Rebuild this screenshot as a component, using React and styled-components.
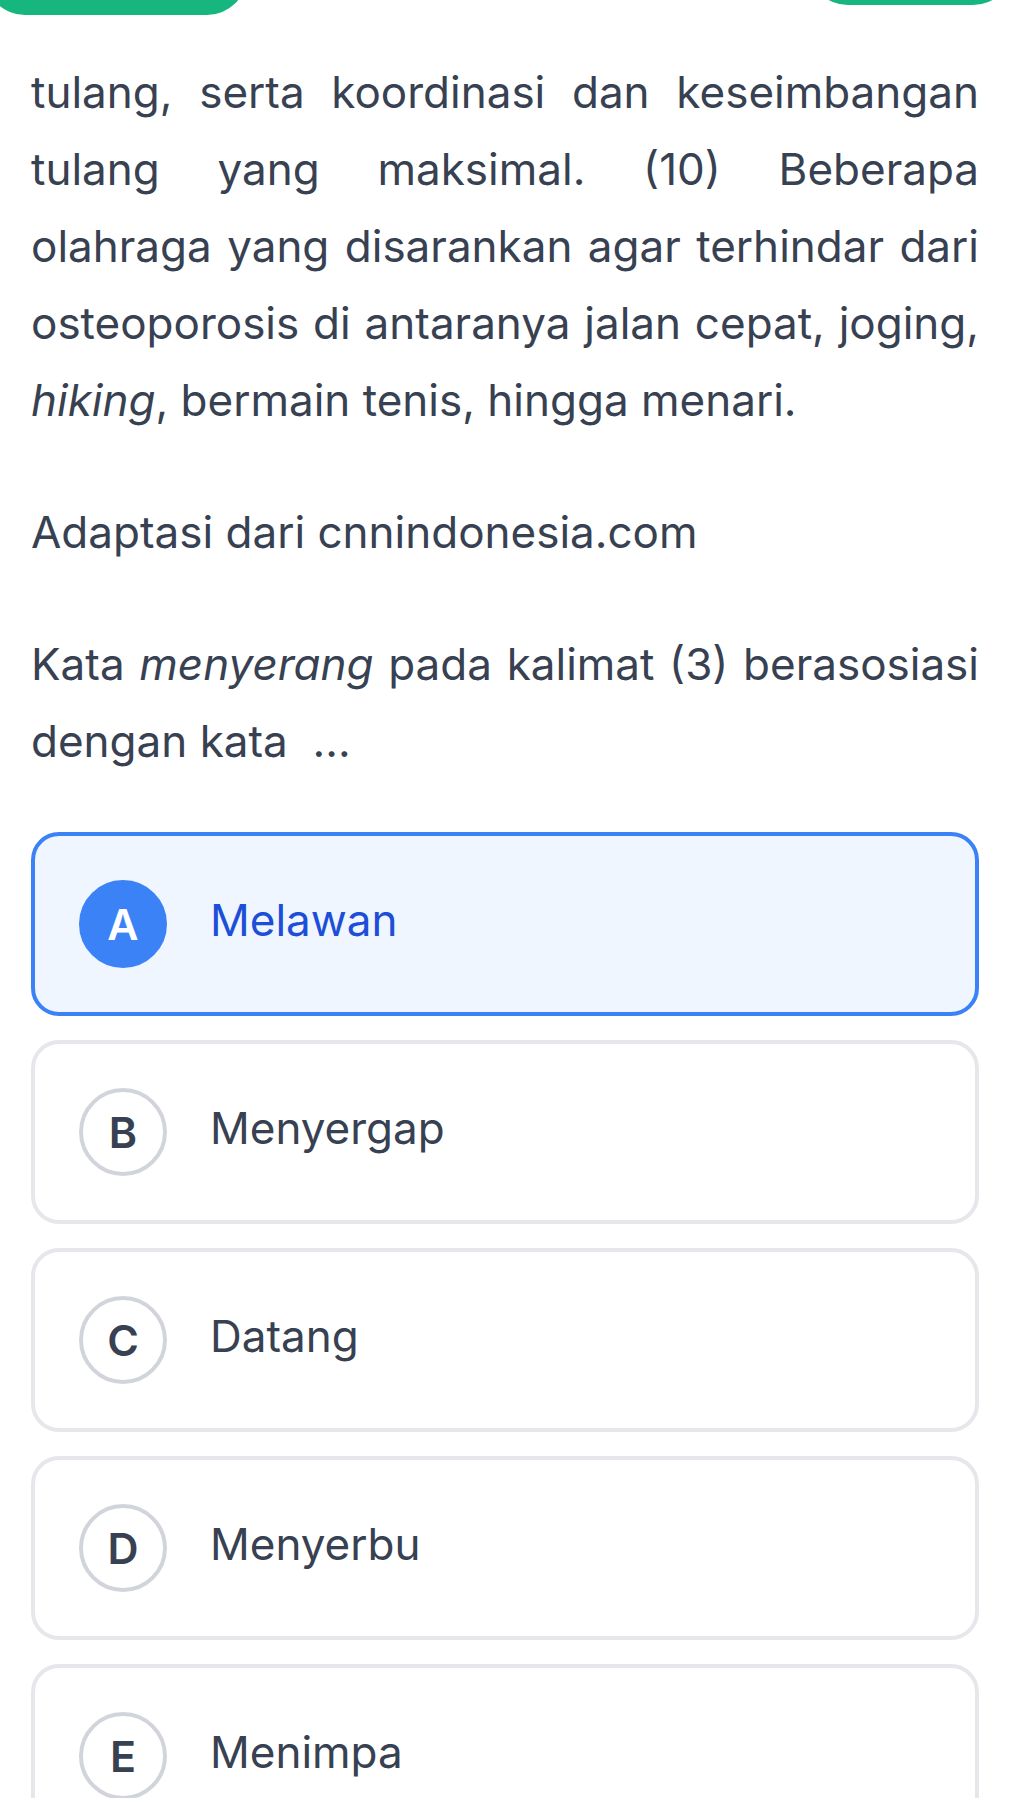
import React from 'react'
import styled, { createGlobalStyle } from 'styled-components'

const GlobalStyle = createGlobalStyle`
  body {
    margin: 0;
    background: #fff;
    font-family: Inter, "Noto Sans", sans-serif;
  }
`

const Screen = styled.div`
  width: 1020px;
  min-height: 1798px;
  overflow: hidden;
`

const TopBar = styled.div`
  display: flex;
  justify-content: space-between;
  align-items: flex-start;
  height: 15px;
  padding-right: 7px;
`

const Pill = styled.div`
  width: ${p => p.$width}px;
  height: 80px;
  margin-top: ${p => p.$visible - 80}px;
  margin-left: ${p => p.$shift || 0}px;
  border-radius: 40px;
  background: #17b67e;
`

const Content = styled.main`
  display: flex;
  flex-direction: column;
  gap: 55px;
  padding: 39px 41px 40px 31px;
`

const Passage = styled.div`
  color: #374151;
  font-size: 44px;
  line-height: 77px;
`

const Line = styled.div`
  text-align: justify;
  text-align-last: ${p => (p.$last ? 'left' : 'justify')};
  white-space: nowrap;
`

const OptionList = styled.div`
  display: flex;
  flex-direction: column;
  gap: 24px;
  margin-top: -3px;
`

const Option = styled.div`
  display: flex;
  align-items: center;
  gap: 43px;
  box-sizing: border-box;
  height: 184px;
  padding: 0 44px;
  border: 4px solid ${p => (p.$selected ? '#3b82f6' : '#e5e7eb')};
  border-radius: 28px;
  background: ${p => (p.$selected ? '#eff6ff' : '#fff')};
`

const Badge = styled.div`
  flex: none;
  display: flex;
  align-items: center;
  justify-content: center;
  box-sizing: border-box;
  width: 88px;
  height: 88px;
  border-radius: 50%;
  border: 4px solid ${p => (p.$selected ? '#3b82f6' : '#d1d5db')};
  background: ${p => (p.$selected ? '#3b82f6' : 'transparent')};
  color: ${p => (p.$selected ? '#fff' : '#374151')};
  font-size: 43px;
  font-weight: 600;
`

const Label = styled.span`
  font-size: 44px;
  color: ${p => (p.$selected ? '#1d4ed8' : '#374151')};
  margin-top: -9px;
`

const options = [
  { key: 'A', text: 'Melawan', selected: true },
  { key: 'B', text: 'Menyergap' },
  { key: 'C', text: 'Datang' },
  { key: 'D', text: 'Menyerbu' },
  { key: 'E', text: 'Menimpa' },
]

const App = () => (
  <Screen>
    <GlobalStyle />
    <TopBar>
      <Pill $width={262} $visible={15} $shift={-15} />
      <Pill $width={205} $visible={5} />
    </TopBar>
    <Content>
      <Passage>
        <Line>tulang, serta koordinasi dan keseimbangan</Line>
        <Line>tulang yang maksimal. (10) Beberapa</Line>
        <Line>olahraga yang disarankan agar terhindar dari</Line>
        <Line>osteoporosis di antaranya jalan cepat, joging,</Line>
        <Line $last>
          <i>hiking</i>, bermain tenis, hingga menari.
        </Line>
      </Passage>
      <Passage>
        <Line $last>Adaptasi dari cnnindonesia.com</Line>
      </Passage>
      <Passage>
        <Line>
          Kata <i>menyerang</i> pada kalimat (3) berasosiasi
        </Line>
        <Line $last>dengan kata&nbsp; ...</Line>
      </Passage>
      <OptionList>
        {options.map(o => (
          <Option key={o.key} $selected={o.selected}>
            <Badge $selected={o.selected}>{o.key}</Badge>
            <Label $selected={o.selected}>{o.text}</Label>
          </Option>
        ))}
      </OptionList>
    </Content>
  </Screen>
)

export default App
